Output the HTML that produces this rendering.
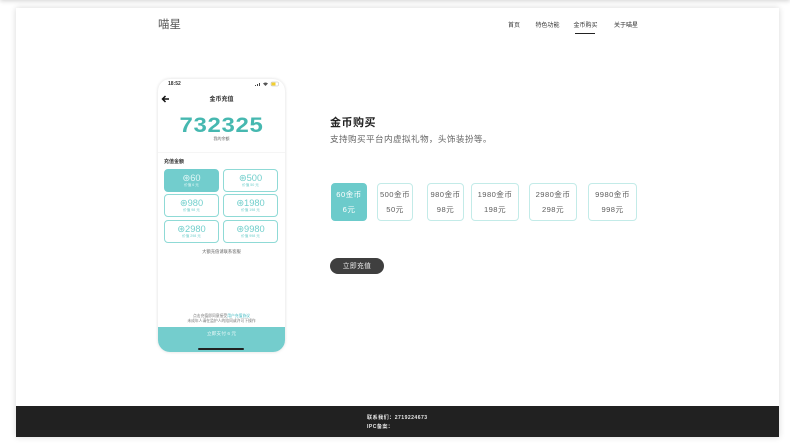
<!DOCTYPE html>
<html lang="zh"><head><meta charset="utf-8"><title>喵星</title>
<style>
*{box-sizing:border-box;margin:0;padding:0}
html,body{width:790px;height:448px;overflow:hidden;background:#fff;font-family:"Liberation Sans","Noto Sans CJK SC",sans-serif}
.a{position:absolute;white-space:nowrap}
.c{text-align:center}
#top{left:0;top:-10px;width:790px;height:10px;box-shadow:0 1px 5px rgba(0,0,0,.18)}
#panel{left:16px;top:8px;width:763px;height:429px;background:#fff;box-shadow:0 0 6px rgba(0,0,0,.16)}
#foot{left:16px;top:406px;width:763px;height:31px;background:#212121}
.nav{top:22px;font-size:6px;line-height:9px;color:#333}
.opt{top:183px;height:38px;border:1.500px solid #c3ebe8;border-radius:4px;background:#fff;color:#5c5c5c;text-align:center;font-size:7.600px;letter-spacing:.45px}
.opt.on{background:#6ccbcb;border-color:#6ccbcb;color:#fff}
.opt b{position:absolute;left:0;right:0;font-weight:400;line-height:10px}
.opt b:first-child{top:6px}.opt b:last-child{top:21px}
#phone{left:158px;top:79px;width:127px;height:273px;border-radius:12px;background:#fff;box-shadow:0 0 3px rgba(0,0,0,.14);overflow:hidden}
.g{width:55px;height:23px;border:1px solid #8fdad6;border-radius:4px;color:#72cfcc;text-align:center;background:#fff}
.g.on{background:#72cdcd;border-color:#72cdcd;color:#dff6f5}
.g b{position:absolute;left:0;right:0;top:3px;font-weight:400;font-size:9.300px;line-height:10px}
.g i{position:absolute;left:0;right:0;top:11.500px;font-style:normal;font-size:3.600px;line-height:6px}
</style></head><body>
<div class="a" id="top"></div>
<div class="a" id="panel"></div>
<div class="a" style="left:158px;top:17px;font-size:11.500px;line-height:16px;color:#555">喵星</div>
<div class="a nav" style="left:508px">首页</div>
<div class="a nav" style="left:535.500px">特色功能</div>
<div class="a nav" style="left:573.500px">金币购买</div>
<div class="a nav" style="left:614px">关于喵星</div>
<div class="a" style="left:575px;top:33px;width:20px;height:1px;background:#222"></div>

<div class="a" id="phone">
 <div class="a" style="left:10px;top:2px;font-size:5px;line-height:7px;font-weight:700;color:#333">18:52</div>
 <svg class="a" style="left:96px;top:2px" width="26" height="6" viewBox="0 0 26 6">
  <path d="M1 4h1v1H1zM3 3h1v2H3zM5 2h1v3H5z" fill="#444"/>
  <path d="M9 2.500q2.500-2 5 0l-2.500 2.500z" fill="#555"/>
  <rect x="17" y="1" width="7.500" height="4" rx="1" fill="#fff" stroke="#bbb" stroke-width=".5"/>
  <rect x="17.500" y="1.500" width="4" height="3" fill="#f2cf2e"/>
 </svg>
 <svg class="a" style="left:3px;top:16px" width="9" height="8" viewBox="0 0 9 8">
  <path d="M8 4H2M4.500 1L1.500 4l3 3" fill="none" stroke="#111" stroke-width="1.500"/>
 </svg>
 <div class="a c" style="left:0;width:127px;top:16.500px;font-size:6px;line-height:9px;font-weight:700;color:#333">金币充值</div>
 <div class="a c" style="left:0;width:127px;top:33.500px;font-size:21px;line-height:26px;font-weight:700;letter-spacing:.6px;color:#46b8b0;transform:scaleX(1.14);margin-left:-.5px">732325</div>
 <div class="a c" style="left:0;width:127px;top:57px;font-size:4px;line-height:6px;color:#666">我的余额</div>
 <div class="a" style="left:0;top:73px;width:127px;height:1px;background:#f5f5f5"></div>
 <div class="a" style="left:6px;top:78.500px;font-size:5px;line-height:8px;font-weight:700;color:#333">充值金额</div>
 <div class="a g on" style="left:6px;top:90px"><b>⊛60</b><i>价值 6 元</i></div>
 <div class="a g" style="left:65px;top:90px"><b>⊛500</b><i>价值 50 元</i></div>
 <div class="a g" style="left:6px;top:115px"><b>⊛980</b><i>价值 98 元</i></div>
 <div class="a g" style="left:65px;top:115px"><b>⊛1980</b><i>价值 198 元</i></div>
 <div class="a g" style="left:6px;top:141px"><b>⊛2980</b><i>价值 298 元</i></div>
 <div class="a g" style="left:65px;top:141px"><b>⊛9980</b><i>价值 998 元</i></div>
 <div class="a c" style="left:0;width:127px;top:169px;font-size:4.300px;line-height:7px;color:#666">大额充值请联系客服</div>
 <div class="a c" style="left:0;width:127px;top:235px;font-size:3.800px;line-height:5px;color:#777">点击充值即同意接受<span style="color:#3fb8c0">用户充值协议</span></div>
 <div class="a c" style="left:0;width:127px;top:239.500px;font-size:3.800px;line-height:5px;color:#777">未成年人请在监护人的陪同或许可下操作</div>
 <div class="a" style="left:0;top:248px;width:127px;height:25px;background:#74cdcd"></div>
 <div class="a c" style="left:0;width:127px;top:252px;font-size:4.800px;line-height:8px;color:#e6f8f7">立即支付 6 元</div>
 <div class="a" style="left:40px;top:269px;width:46px;height:2px;border-radius:1px;background:#222"></div>
</div>

<div class="a" style="left:330px;top:114.500px;font-size:11px;line-height:16px;font-weight:700;color:#222;letter-spacing:.5px">金币购买</div>
<div class="a" style="left:330px;top:132px;font-size:8.600px;line-height:14px;color:#666;letter-spacing:.4px">支持购买平台内虚拟礼物，头饰装扮等。</div>

<div class="a opt on" style="left:331px;width:36px"><b>60金币</b><b>6元</b></div>
<div class="a opt" style="left:377px;width:36px"><b>500金币</b><b>50元</b></div>
<div class="a opt" style="left:427px;width:37px"><b>980金币</b><b>98元</b></div>
<div class="a opt" style="left:471px;width:48px"><b>1980金币</b><b>198元</b></div>
<div class="a opt" style="left:529px;width:48px"><b>2980金币</b><b>298元</b></div>
<div class="a opt" style="left:588px;width:49px"><b>9980金币</b><b>998元</b></div>

<div class="a c" style="left:330px;top:258px;width:54px;height:16px;border-radius:8px;background:#3f3f3f;color:#eee;font-size:6.800px;line-height:17px;letter-spacing:.3px;font-weight:400">立即充值</div>

<div class="a" id="foot"></div>
<div class="a" style="left:367px;top:414px;font-size:5.100px;line-height:9px;font-weight:700;color:#e8e8e8;letter-spacing:.45px">联系我们：2719224673</div>
<div class="a" style="left:367px;top:423px;font-size:5.100px;line-height:9px;font-weight:700;color:#e8e8e8;letter-spacing:.45px">IPC备案：</div>
</body></html>
